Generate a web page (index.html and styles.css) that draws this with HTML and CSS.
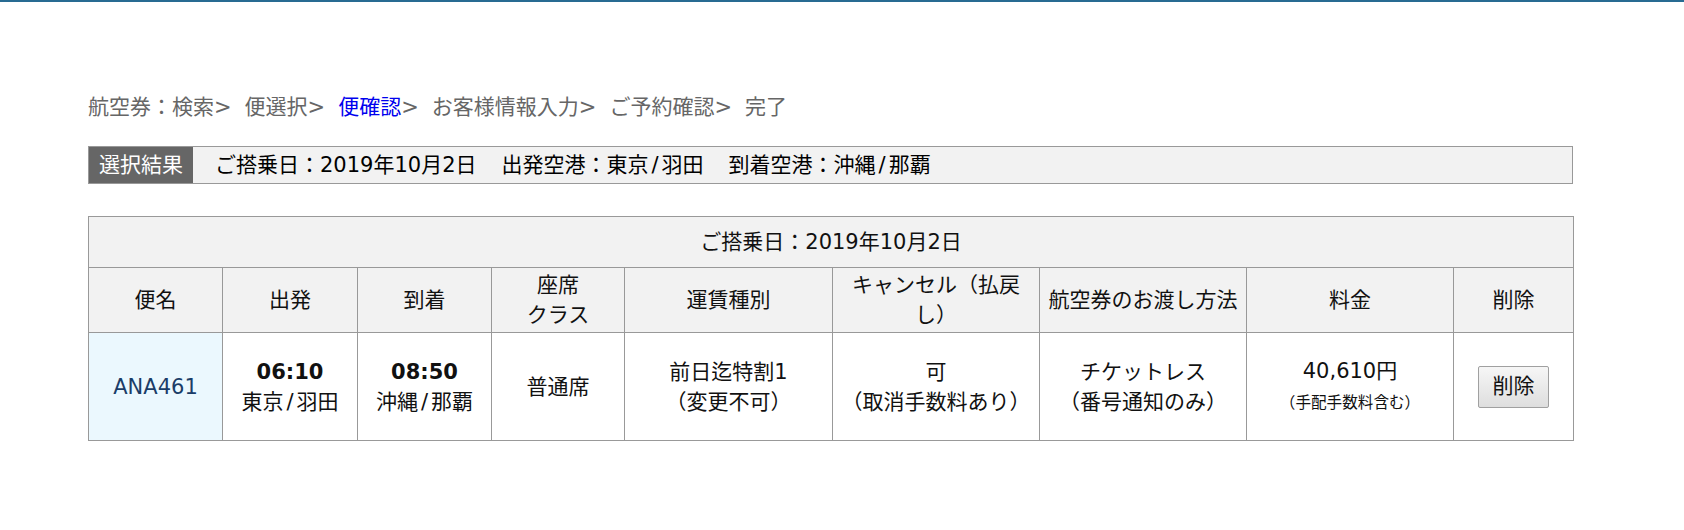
FILE: index.html
```html
<!DOCTYPE html>
<html lang="ja">
<head>
<meta charset="utf-8">
<title>便確認</title>
<link rel="stylesheet" href="styles.css">
</head>
<body>
<div class="topbar"></div>
<main class="page">
  <nav class="crumbs">
    <span>航空券：検索&gt;</span>
    <span>便選択&gt;</span>
    <span><span class="current">便確認</span>&gt;</span>
    <span>お客様情報入力&gt;</span>
    <span>ご予約確認&gt;</span>
    <span>完了</span>
  </nav>

  <div class="result">
    <div class="result-label">選択結果</div>
    <div class="result-text">
      <span>ご搭乗日：2019年10月2日</span>
      <span>出発空港：東京<span class="sl">/</span>羽田</span>
      <span>到着空港：沖縄<span class="sl">/</span>那覇</span>
    </div>
  </div>

  <table class="flights">
    <colgroup>
      <col class="w-name"><col class="w-dep"><col class="w-arr"><col class="w-seat">
      <col class="w-fare"><col class="w-cancel"><col class="w-ticket"><col class="w-price"><col class="w-del">
    </colgroup>
    <tr class="row-date">
      <td colspan="9">ご搭乗日：2019年10月2日</td>
    </tr>
    <tr class="row-head">
      <th>便名</th>
      <th>出発</th>
      <th>到着</th>
      <th>座席<br>クラス</th>
      <th>運賃種別</th>
      <th>キャンセル（払戻し）</th>
      <th>航空券のお渡し方法</th>
      <th>料金</th>
      <th>削除</th>
    </tr>
    <tr class="row-data">
      <td class="flight-no">ANA461</td>
      <td><b class="time">06:10</b><br>東京<span class="sl">/</span>羽田</td>
      <td><b class="time">08:50</b><br>沖縄<span class="sl">/</span>那覇</td>
      <td>普通席</td>
      <td>前日迄特割1<br>（変更不可）</td>
      <td>可<br>（取消手数料あり）</td>
      <td>チケットレス<br>（番号通知のみ）</td>
      <td>40,610円<br><span class="note">（手配手数料含む）</span></td>
      <td><button class="del-btn" type="button">削除</button></td>
    </tr>
  </table>
</main>
</body>
</html>
```

FILE: styles.css
```css
html, body {
  margin: 0;
  padding: 0;
  background: #fff;
}

body {
  font-family: "DejaVu Sans", "Noto Sans CJK JP", sans-serif;
  font-size: 21px;
  color: #111;
}

.topbar {
  height: 2px;
  background: #286b92;
}

.page {
  padding: 90px 0 0 88px;
  width: 1485px;
}

.crumbs {
  display: flex;
  gap: 13px;
  color: #666;
  line-height: 30px;
  height: 30px;
}

.crumbs .current {
  color: #0000ee;
}

.result {
  margin-top: 24px;
  display: flex;
  align-items: stretch;
  height: 36px;
  border: 1px solid #999;
  background: #f2f2f2;
}

.result-label {
  background: #666;
  color: #fff;
  padding: 0 10px;
  line-height: 36px;
}

.result-text {
  display: flex;
  gap: 25px;
  padding-left: 22px;
  line-height: 36px;
  color: #000;
}

.sl {
  padding: 0 3px;
}

.flights {
  margin-top: 32px;
  width: 1485px;
  border-collapse: collapse;
  table-layout: fixed;
  line-height: 30px;
}

.w-name { width: 134px; }
.w-dep { width: 135px; }
.w-arr { width: 134px; }
.w-seat { width: 133px; }
.w-fare { width: 208px; }
.w-cancel { width: 207px; }
.w-ticket { width: 207px; }
.w-price { width: 207px; }
.w-del { width: 120px; }

.flights td,
.flights th {
  border: 1px solid #999;
  text-align: center;
  vertical-align: middle;
  padding: 0 4px;
  font-weight: normal;
}

.row-date td {
  background: #f2f2f2;
  height: 50px;
}

.row-head th {
  background: #f2f2f2;
  height: 64px;
}

.row-data td {
  height: 107px;
}

.flight-no {
  background: #ebf8fe;
  color: #1a3d68;
}

.time {
  font-weight: bold;
}

.note {
  font-size: 15.6px;
}

.del-btn {
  font-family: inherit;
  font-size: 21px;
  color: #111;
  width: 71px;
  height: 42px;
  padding: 0;
  border: 1px solid #a0a0a0;
  border-radius: 2px;
  background: linear-gradient(#f6f6f6, #dedede);
  line-height: 1;
}
```
